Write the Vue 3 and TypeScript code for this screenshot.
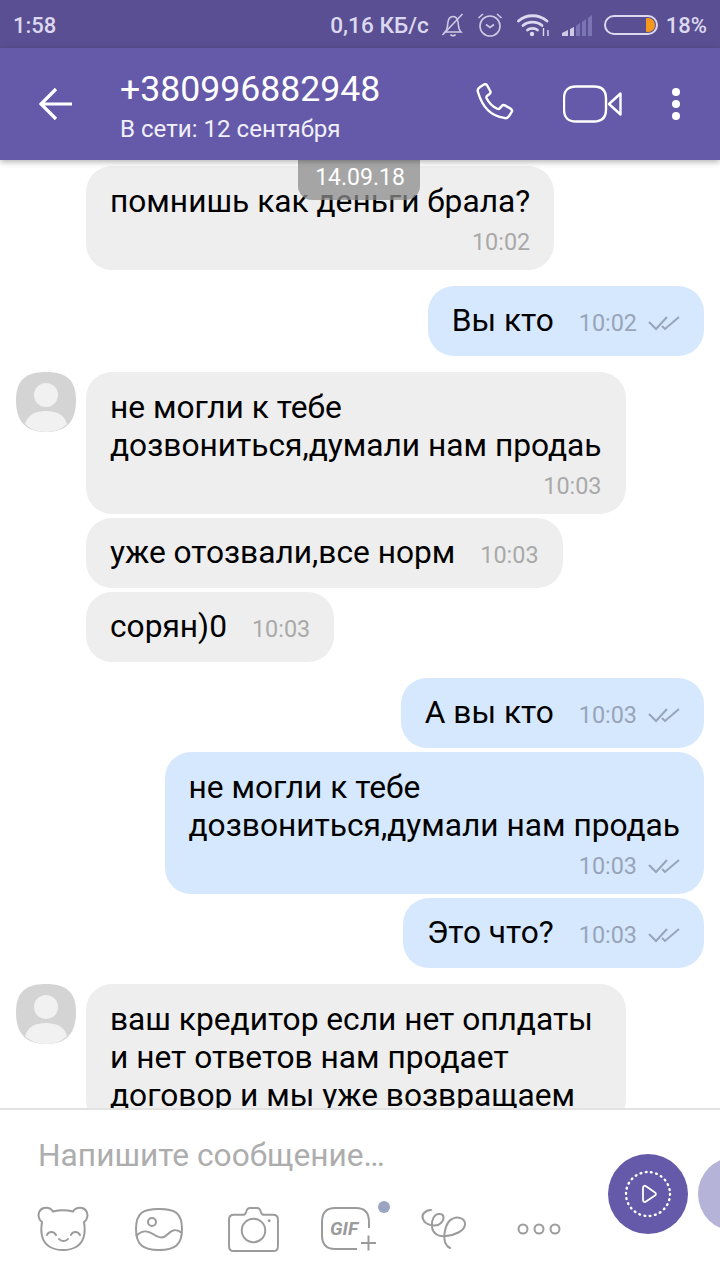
<script setup lang="ts">
interface Message {
  id: number;
  mine: boolean;
  lines: string[];
  time?: string;
  avatar?: boolean;
  stacked?: boolean;
  first?: boolean;
  long?: boolean;
}

const messages: Message[] = [
  { id: 1, mine: false, lines: ["помнишь как деньги брала?"], time: "10:02", stacked: true },
  { id: 2, mine: true, lines: ["Вы кто"], time: "10:02", first: true },
  { id: 3, mine: false, lines: ["не могли к тебе", "дозвониться,думали нам продаь"], time: "10:03", avatar: true, stacked: true, first: true },
  { id: 4, mine: false, lines: ["уже отозвали,все норм"], time: "10:03" },
  { id: 5, mine: false, lines: ["сорян)0"], time: "10:03" },
  { id: 6, mine: true, lines: ["А вы кто"], time: "10:03", first: true },
  { id: 7, mine: true, lines: ["не могли к тебе", "дозвониться,думали нам продаь"], time: "10:03", stacked: true },
  { id: 8, mine: true, lines: ["Это что?"], time: "10:03" },
  // the last bubble runs under the composer
  { id: 9, mine: false, lines: ["ваш кредитор если нет оплдаты", "и нет ответов нам продает", "договор и мы уже возвращаем"], avatar: true, stacked: true, first: true, long: true },
];
</script>

<template>
  <div class="phone">
    <div class="status">
      <span class="clock">1:58</span>
      <div class="status-right">
        <span class="speed">0,16 КБ/с</span>
        <svg class="st-bell" width="24" height="26" viewBox="0 0 24 26" fill="none" stroke="#cfcbe6" stroke-width="1.6">
          <path d="M4 20c2-2 2.500-4 2.700-8C7 7 9 4.500 12 4.500S17 7 17.300 12c.2 4 .7 6 2.700 8z" />
          <path d="M9.500 22.500c1 1.600 4 1.600 5 0" />
          <path d="M1.500 23 21.500 2" />
        </svg>
        <svg class="st-alarm" width="26" height="26" viewBox="0 0 26 26" fill="none" stroke="#cfcbe6" stroke-width="1.6">
          <circle cx="13" cy="14" r="10" />
          <path d="M9 12.500l4 3 4-3" />
          <path d="M1.500 6 6 2M24.500 6 20 2" />
        </svg>
        <svg class="st-wifi" width="33" height="24" viewBox="0 0 33 24" fill="none" stroke="#dcd8ef" stroke-width="2.800" stroke-linecap="round">
          <path d="M1.500 8C9 1 22 1 30 8" />
          <path d="M6 12.500c5-4.500 14-4.500 19 0" />
          <path d="M10.500 17c2.500-2.200 7.500-2.200 10 0" />
          <circle cx="15" cy="21" r="2.200" fill="#dcd8ef" stroke="none" />
          <path d="M26.500 15v8M31 17v6" stroke-width="1.400" stroke-linecap="butt" />
        </svg>
        <svg class="st-signal" width="31" height="22" viewBox="0 0 31 22">
          <path d="M0 22v-3l6-3v6z" fill="#cfcbe6" />
          <path d="M8 22v-7l4-2v9z" fill="#cfcbe6" />
          <path d="M14 22V12l4-3v13zM20 22V8l4-3v17zM26 22V4l4-3v21z" fill="#7d75b3" />
        </svg>
        <div class="battery"><div class="battery-fill"></div></div>
        <span class="percent">18%</span>
      </div>
    </div>

    <header class="toolbar">
      <svg class="back" width="34" height="34" viewBox="0 0 34 34" fill="none" stroke="#fff" stroke-width="3.200">
        <path d="M33 17H2M17 2 2 17l15 15" />
      </svg>
      <div class="title">
        <div class="phone-number">+380996882948</div>
        <div class="seen">В сети: 12 сентября</div>
      </div>
      <div class="actions">
        <svg width="42" height="42" viewBox="0 0 42 42" fill="none" stroke="#fff" stroke-width="2.400" stroke-linejoin="round">
          <path d="M3 9c-1-2 0-3.500 2-5l4-2.500c1.500-.8 2.500-.3 3.200 1l3 5.500c.7 1.300.4 2.200-.7 3l-2.500 2c-.8.700-.8 1.500-.3 2.500 2 4 6 8 10.500 10.300 1 .5 1.800.4 2.500-.4l2.200-2.500c.9-1 1.800-1.200 3-.5l6 3.500c1.300.8 1.500 1.800.8 3l-2.500 4c-1.300 2-3 2.800-5 2C15 33 7 23 3 9z" />
        </svg>
        <svg width="59" height="38" viewBox="0 0 59 38" fill="none" stroke="#fff" stroke-width="2.400" stroke-linejoin="round">
          <path d="M13 1.500h18c8 0 12 4 12 12v11c0 8-4 12-12 12H13c-8 0-12-4-12-12v-11c0-8 4-12 12-12z" />
          <path d="M57.500 8.500v21L46 19z" />
        </svg>
        <div class="dots"><i></i><i></i><i></i></div>
      </div>
    </header>

    <main class="chat">
      <div class="date-pill">14.09.18</div>
      <div
        v-for="m in messages"
        :key="m.id"
        class="row"
        :class="{ mine: m.mine, first: m.first }"
      >
        <svg v-if="m.avatar" class="avatar" width="60" height="60" viewBox="0 0 60 60">
          <path d="M30 0c20 0 30 8 30 28 0 22-10 32-30 32S0 50 0 28C0 8 10 0 30 0z" fill="#d4d4d4" />
          <circle cx="30" cy="23" r="12" fill="#f1f1f1" />
          <path d="M9 52c3-10 11-13 21-13s18 3 21 13c-5 5-12 8-21 8S14 57 9 52z" fill="#f1f1f1" />
        </svg>
        <div class="bubble" :class="{ stacked: m.stacked, sent: m.mine, long: m.long }">
          <div class="text">
            <div v-for="(line, i) in m.lines" :key="i">{{ line }}</div>
          </div>
          <div v-if="m.time" class="meta">
            <span class="time">{{ m.time }}</span>
            <svg v-if="m.mine" class="ticks" width="32" height="16" viewBox="0 0 32 16" fill="none" stroke="#98a4b8" stroke-width="2">
              <path d="M1 7l7 7L19 2" />
              <path d="M14 11l3 3L31 2" />
            </svg>
          </div>
        </div>
      </div>
    </main>

    <footer class="composer">
      <div class="composer-left">
        <div class="placeholder">Напишите сообщение…</div>
        <div class="tools">
          <svg width="50" height="44" viewBox="0 0 50 44" fill="none" stroke="#9b9b9b" stroke-width="2" stroke-linecap="round">
            <path d="M15 4.500C13 1.500 9 .5 6 1 1.500 2-.5 7 1 11c.5 1.500 1.500 3 3 4-1.500 9-.5 20 8 25 7 4 19 4 26 0 8.500-5 9.500-16 8-25 1.500-1 2.500-2.500 3-4 1.500-4-.5-9-5-10-3-.5-7 .5-9 3.500-6-1.500-14-1.500-20 0z" />
            <path d="M9 28c1.500-4 7-4 9 0M33 28c1.500-4 7-4 9 0M21 32c2 2.500 7 2.500 9 0" />
          </svg>
          <svg width="48" height="43" viewBox="0 0 48 43" fill="none" stroke="#9b9b9b" stroke-width="2">
            <path d="M24 1c16 0 23 4 23 20 0 16-7 21-23 21S1 37 1 21C1 5 8 1 24 1z" />
            <circle cx="17" cy="14" r="4" />
            <path d="M1 28c6-6 11-6 17-2s10 5 15 0 9-5 14-1" />
          </svg>
          <svg width="51" height="45" viewBox="0 0 52 46" fill="none" stroke="#9b9b9b" stroke-width="2">
            <path d="M6 8h9c2 0 3-1 3.500-3 .5-2.500 2-4 4-4h7c2 0 3.500 1.500 4 4 .5 2 1.500 3 3.500 3h9c3 0 5 2 5 5v27c0 3-2 5-5 5H6c-3 0-5-2-5-5V13c0-3 2-5 5-5z" />
            <circle cx="26" cy="24" r="12" />
            <circle cx="42" cy="14" r="1.500" fill="#9b9b9b" stroke="none" />
          </svg>
          <div class="gif">
            <svg width="56" height="45" viewBox="0 0 56 45" fill="none" stroke="#9b9b9b" stroke-width="2">
              <path d="M36 42H14C5 42 1 37 1 28V15C1 6 5 1 14 1h21c9 0 13 5 13 14v6" />
              <path d="M40 36h15M47.500 28.500v15" />
            </svg>
            <span class="gif-label">GIF</span>
            <i class="gif-dot"></i>
          </div>
          <svg class="doodle" width="44" height="40" viewBox="0 0 44 40" fill="none" stroke="#9b9b9b" stroke-width="2" stroke-linecap="round">
            <path d="M9 1C3 1-1 6 1 10c2 6 13 9 18 4 4-4 3-9-1-9-6-1-9 7-8 13 1 7 7 10 14 9 9-1 19-5 19-12 0-6-8-8-13-5-6 3-9 15-7 23 1 3 3 5 5 6" />
          </svg>
          <svg width="44" height="12" viewBox="0 0 44 12" fill="none" stroke="#9b9b9b" stroke-width="2">
            <circle cx="6" cy="6" r="4.500" />
            <circle cx="22" cy="6" r="4.500" />
            <circle cx="38" cy="6" r="4.500" />
          </svg>
        </div>
      </div>
      <div class="send-buttons">
        <div class="send">
          <svg width="48" height="48" viewBox="0 0 48 48" fill="none" stroke="#fff">
            <circle cx="24" cy="24" r="22" stroke-width="2.400" stroke-dasharray="0.800 4.500" stroke-linecap="round" />
            <path d="M19 18c0-2 1.500-2.800 3-1.800l9 6.200c1.200.8 1.200 2.200 0 3l-9 6.200c-1.500 1-3 .2-3-1.800z" stroke-width="1.800" />
          </svg>
        </div>
        <div class="send second"></div>
      </div>
    </footer>
  </div>
</template>

<style>
html, body {
  margin: 0;
  background: #fff;
}
</style>

<style scoped>
.phone {
  width: 720px;
  height: 1280px;
  display: flex;
  flex-direction: column;
  overflow: hidden;
  position: relative;
  background: #fff;
  font-family: Roboto, "Liberation Sans", sans-serif;
}

.status {
  height: 48px;
  flex: none;
  display: flex;
  align-items: center;
  justify-content: space-between;
  padding: 2px 13px 0;
  box-sizing: border-box;
  background: #5a4f92;
  color: #dcd8ef;
  font-size: 22px;
  font-weight: 500;
}

.status-right {
  display: flex;
  align-items: center;
}

.speed {
  margin-right: 12px;
  font-size: 22.6px;
}

.st-alarm {
  margin-left: 12px;
}

.st-wifi {
  margin-left: 14px;
}

.st-signal {
  margin-left: 12px;
}

.battery {
  width: 54px;
  height: 20px;
  margin-left: 11px;
  box-sizing: border-box;
  border: 2px solid #dcd8ef;
  border-radius: 10px;
  padding: 1px;
  display: flex;
  justify-content: flex-end;
}

.battery-fill {
  width: 9px;
  background: #f6981e;
  border-radius: 1px 7px 7px 1px;
}

.percent {
  margin-left: 8px;
}

.toolbar {
  height: 112px;
  flex: none;
  display: flex;
  align-items: center;
  padding: 0 40px 0 39px;
  background: #655aa9;
  color: #fff;
  position: relative;
  z-index: 2;
  box-shadow: 0 2px 6px rgba(0, 0, 0, 0.3);
}

.title {
  margin-left: 47px;
  flex: 1;
}

.phone-number {
  font-size: 35.6px;
  line-height: 40px;
  margin-top: 3px;
}

.seen {
  font-size: 24.1px;
  line-height: 28px;
  margin-top: 6px;
  color: #f1f0fa;
}

.actions {
  display: flex;
  align-items: center;
}

.actions svg + svg {
  margin-left: 46px;
}

.dots {
  margin-left: 50px;
  display: flex;
  flex-direction: column;
  gap: 4px;
}

.dots i {
  width: 8px;
  height: 8px;
  border-radius: 50%;
  background: #fff;
}

.chat {
  flex: 1;
  min-height: 0;
  overflow: hidden;
  position: relative;
  padding: 6px 16px 0;
  display: flex;
  flex-direction: column;
}

.date-pill {
  position: absolute;
  top: 0;
  left: 298px;
  width: 122px;
  height: 40px;
  box-sizing: border-box;
  padding-top: 4px;
  padding-left: 2px;
  text-align: center;
  color: #fff;
  font-size: 23px;
  line-height: 28px;
  background: rgba(140, 140, 140, 0.75);
  border-radius: 0 0 14px 14px;
  z-index: 1;
}

.row {
  flex: none;
  display: flex;
  margin-bottom: 4px;
  padding-left: 70px;
  position: relative;
}

.row.first {
  margin-top: 12px;
}

.row.mine {
  justify-content: flex-end;
}

.avatar {
  position: absolute;
  left: 0;
  top: 0;
}

.bubble {
  display: flex;
  align-items: flex-start;
  gap: 25px;
  box-sizing: border-box;
  min-height: 70px;
  padding: 16px 24px;
  background: #eeeeee;
  border-radius: 26px;
  color: #000;
  font-size: 31.7px;
  line-height: 38px;
}

.bubble.sent {
  background: #d6e8fe;
}

.bubble.stacked {
  flex-direction: column;
  gap: 0;
  padding: 17px 24px 11px;
}

.bubble.stacked .meta {
  align-self: flex-end;
}

.bubble.long {
  min-width: 540px;
}

.text {
  white-space: nowrap;
}

.meta {
  display: flex;
  align-items: center;
  gap: 11px;
  height: 38px;
  padding-top: 3px;
  box-sizing: border-box;
}

.time {
  font-size: 23.4px;
  color: #a9a9a9;
  white-space: nowrap;
}

.sent .time {
  color: #98a4b8;
}

.composer {
  height: 172px;
  flex: none;
  box-sizing: border-box;
  border-top: 2px solid #e2e2e2;
  background: #fff;
  display: flex;
  position: relative;
  z-index: 2;
}

.composer-left {
  flex: 1;
  min-width: 0;
  padding-left: 38px;
}

.placeholder {
  margin-top: 28px;
  font-size: 31.7px;
  line-height: 36px;
  color: #adadad;
}

.tools {
  margin-top: 33px;
  height: 44px;
  display: flex;
  align-items: center;
}

.tools > * {
  flex: none;
}

.tools svg {
  overflow: visible;
}

.tools > :nth-child(2) {
  margin-left: 47px;
}

.tools > :nth-child(3) {
  margin-left: 45px;
}

.tools > :nth-child(4) {
  margin-left: 42px;
}

.tools > :nth-child(5) {
  margin-left: 51px;
}

.tools > :nth-child(6) {
  margin-left: 51px;
}

.gif {
  position: relative;
  width: 50px;
  height: 44px;
}

.gif svg {
  display: block;
}

.gif-label {
  position: absolute;
  left: 9px;
  top: 10px;
  font-size: 19px;
  font-weight: 700;
  font-style: italic;
  color: #9b9b9b;
}

.gif-dot {
  position: absolute;
  right: -19px;
  top: -6px;
  width: 12px;
  height: 12px;
  border-radius: 50%;
  background: #9aa5c4;
}

.send-buttons {
  flex: none;
  width: 112px;
  display: flex;
  align-items: flex-start;
  gap: 10px;
  padding-top: 44px;
}

.send {
  flex: none;
  width: 80px;
  height: 80px;
  border-radius: 50%;
  background: #655aa9;
  display: flex;
  align-items: center;
  justify-content: center;
}

.send.second {
  width: 74px;
  height: 74px;
  margin-top: 3px;
  background: #b5b3d8;
}
</style>
